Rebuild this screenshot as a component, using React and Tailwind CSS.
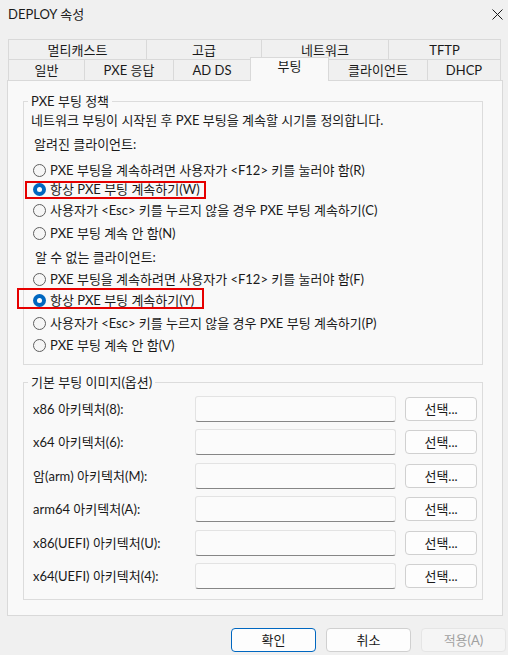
const topTabs = [
  { label: "멀티캐스트", w: "w-[138px]" },
  { label: "고급", w: "w-[115px]" },
  { label: "네트워크", w: "w-[127px]" },
  { label: "TFTP", w: "w-[113px]" },
];

const bottomTabs = [
  { label: "일반", w: "w-[76px]" },
  { label: "PXE 응답", w: "w-[89px]" },
  { label: "AD DS", w: "w-[77px]" },
  { label: "부팅", w: "w-[79px]", active: true },
  { label: "클라이언트", w: "w-[98px]" },
  { label: "DHCP", w: "w-[74px]" },
];

const known = [
  { label: "PXE 부팅을 계속하려면 사용자가 <F12> 키를 눌러야 함(R)", mt: "mt-[9px]" },
  { label: "항상 PXE 부팅 계속하기(W)", mt: "mt-[1px]", checked: true },
  { label: "사용자가 <Esc> 키를 누르지 않을 경우 PXE 부팅 계속하기(C)", mt: "mt-[3px]" },
  { label: "PXE 부팅 계속 안 함(N)", mt: "mt-[5px]" },
];

const unknown = [
  { label: "PXE 부팅을 계속하려면 사용자가 <F12> 키를 눌러야 함(F)", mt: "mt-[5px]" },
  { label: "항상 PXE 부팅 계속하기(Y)", mt: "mt-[3px]", checked: true },
  { label: "사용자가 <Esc> 키를 누르지 않을 경우 PXE 부팅 계속하기(P)", mt: "mt-[5px]" },
  { label: "PXE 부팅 계속 안 함(V)", mt: "mt-[4px]" },
];

const images = [
  { label: "x86 아키텍처(8):", mt: "mt-[6px]" },
  { label: "x64 아키텍처(6):", mt: "mt-[7px]" },
  { label: "암(arm) 아키텍처(M):", mt: "mt-[8px]" },
  { label: "arm64 아키텍처(A):", mt: "mt-[7px]" },
  { label: "x86(UEFI) 아키텍처(U):", mt: "mt-[8px]" },
  { label: "x64(UEFI) 아키텍처(4):", mt: "mt-[7px]" },
];

function Radio({ label, checked, mt }) {
  return (
    <div className={`flex items-center h-[18px] pl-[9px] ${mt}`}>
      {checked ? (
        <span className="w-[13px] h-[13px] rounded-full bg-[#0067c0] flex items-center justify-center shrink-0">
          <span className="w-[5px] h-[5px] rounded-full bg-white" />
        </span>
      ) : (
        <span className="w-[13px] h-[13px] rounded-full border border-[#5f5f5f] bg-[#f6f6f6] shrink-0" />
      )}
      <span className="ml-[4px] whitespace-nowrap">{label}</span>
    </div>
  );
}

export default function App() {
  return (
    <div className="relative w-[508px] h-[655px] overflow-hidden bg-[#f0f0f0] text-[13px] leading-[16px] text-[#1a1a1a] font-['Lato','Noto_Sans_CJK_KR',sans-serif]">
      <div className="flex items-center justify-between h-[27px] pl-[8px] pr-[5px]">
        <span>DEPLOY 속성</span>
        <svg width="11" height="11" viewBox="0 0 11 11" className="mt-[1px]">
          <path d="M0.5 0.5 L10.5 10.5 M10.5 0.5 L0.5 10.5" stroke="#1a1a1a" strokeWidth="1" />
        </svg>
      </div>

      <div className="ml-[8px] mt-[12px] w-[493px]">
        <div className="flex h-[20px]">
          {topTabs.map((t, i) => (
            <div
              key={t.label}
              className={`${t.w} flex items-center justify-center border-t border-l border-[#d9d9d9] ${i === topTabs.length - 1 ? "border-r" : ""}`}
            >
              {t.label}
            </div>
          ))}
        </div>
        <div className="flex h-[21px] items-start">
          {bottomTabs.map((t, i) =>
            t.active ? (
              <div
                key={t.label}
                className={`${t.w} relative z-10 -mt-[2px] h-[24px] pb-[8px] flex items-center justify-center bg-[#f9f9f9] border-t border-l border-r border-[#d9d9d9]`}
              >
                {t.label}
              </div>
            ) : (
              <div
                key={t.label}
                className={`${t.w} h-[21px] flex items-center justify-center border-t border-l border-[#d9d9d9] ${i === bottomTabs.length - 1 ? "border-r" : ""} ${bottomTabs[i - 1] && bottomTabs[i - 1].active ? "border-l-0" : ""}`}
              >
                {t.label}
              </div>
            )
          )}
        </div>
      </div>

      <div className="ml-[7px] w-[496px] h-[536px] border border-[#d9d9d9] bg-[#f9f9f9] pl-[15px] pt-[12px]">
        <fieldset className="w-[460px] h-[272px] border border-[#dcdcdc] px-0 pb-0">
          <legend className="ml-[4px] px-[3px] leading-[16px]">PXE 부팅 정책</legend>
          <div className="pl-[7px] mt-[3px] whitespace-nowrap">
            네트워크 부팅이 시작된 후 PXE 부팅을 계속할 시기를 정의합니다.
          </div>
          <div className="pl-[10px] mt-[8px]">알려진 클라이언트:</div>
          {known.map((r) => (
            <Radio key={r.label} {...r} />
          ))}
          <div className="pl-[11px] mt-[7px]">알 수 없는 클라이언트:</div>
          {unknown.map((r) => (
            <Radio key={r.label} {...r} />
          ))}
        </fieldset>

        <fieldset className="mt-[9px] w-[460px] h-[226px] border border-[#dcdcdc] px-0 pb-0">
          <legend className="ml-[4px] px-[3px] leading-[16px]">기본 부팅 이미지(옵션)</legend>
          {images.map((r) => (
            <div key={r.label} className={`flex items-center h-[26px] pl-[9px] ${r.mt}`}>
              <span className="w-[162px] whitespace-nowrap">{r.label}</span>
              <div className="w-[201px] h-[26px] rounded-[3px] border border-[#e3e3e3] border-b-[#868686] bg-[#fbfbfb]" />
              <button className="ml-[9px] w-[72px] h-[24px] rounded-[4px] border border-[#d0d0d0] bg-[#fdfdfd]">
                선택...
              </button>
            </div>
          ))}
        </fieldset>
      </div>

      <div className="flex justify-end gap-[10px] pr-[2px] mt-[12px]">
        <button className="w-[85px] h-[24px] rounded-[4px] border border-[#0067c0] bg-[#fdfdfd]">
          확인
        </button>
        <button className="w-[85px] h-[24px] rounded-[4px] border border-[#d0d0d0] bg-[#fdfdfd]">
          취소
        </button>
        <button className="w-[85px] h-[24px] rounded-[4px] border border-[#e5e5e5] bg-[#f5f5f5] text-[#a0a0a0]">
          적용(A)
        </button>
      </div>

      <div className="absolute left-[25px] top-[181px] w-[181px] h-[18px] border-2 border-[#e60000]" />
      <div className="absolute left-[17px] top-[288px] w-[187px] h-[21px] border-2 border-[#e60000]" />
    </div>
  );
}
